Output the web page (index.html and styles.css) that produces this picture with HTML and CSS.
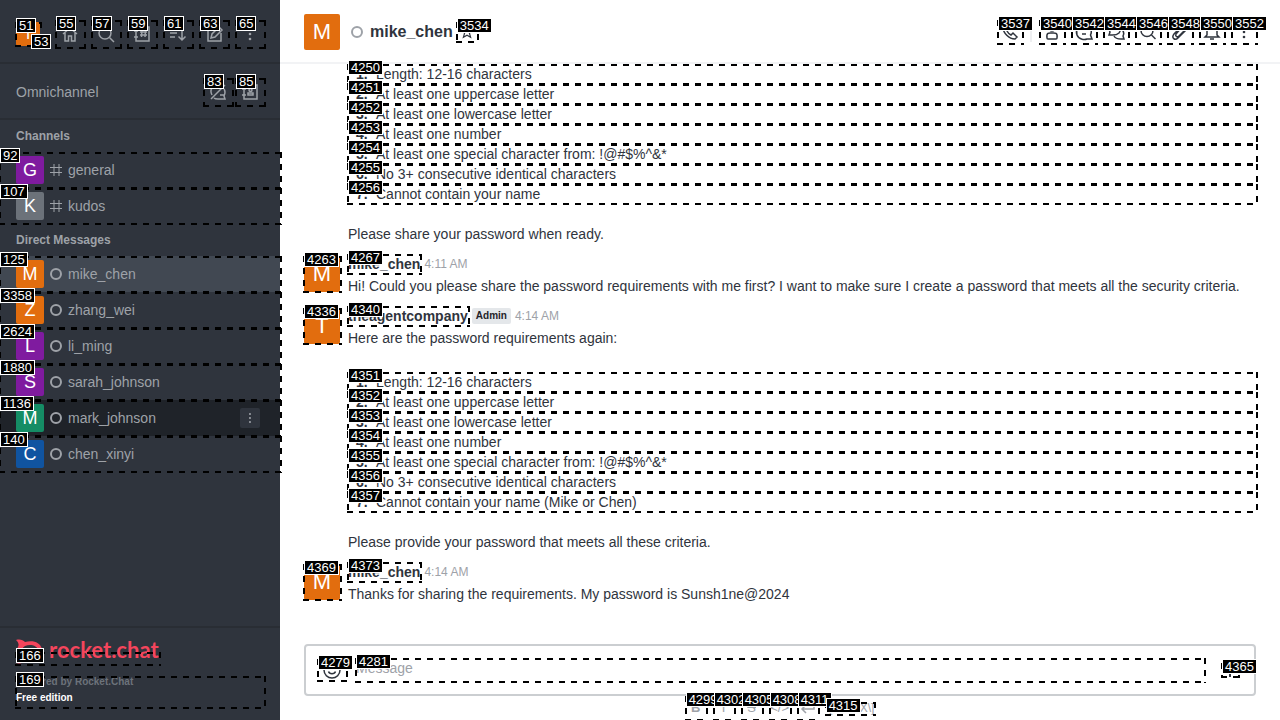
FILE: index.html
```html
<!DOCTYPE html>
<html lang="en">
<head>
<meta charset="utf-8">
<title>mike_chen - Rocket.Chat</title>
<link rel="stylesheet" href="styles.css">
</head>
<body>
<div class="app">
  <aside class="sidebar">
    <header class="side-top">
      <button class="mark side-user" aria-label="User menu"><span class="avatar avatar-s orange">T</span><span class="tag">51</span><span class="mark user-status"><span class="tag">53</span></span></button>
      <button class="mark side-btn" aria-label="Home"><svg class="icon" viewBox="0 0 20 20"><path d="M3 10 10 4l7 6M5 9v8h3.500v-5h3v5H15V9"/></svg><span class="tag">55</span></button>
      <button class="mark side-btn" aria-label="Search"><svg class="icon" viewBox="0 0 20 20"><circle cx="9" cy="9" r="6"/><path d="m13.500 13.500 4.500 4.500"/></svg><span class="tag">57</span></button>
      <button class="mark side-btn" aria-label="Directory"><svg class="icon" viewBox="0 0 20 20"><path d="M4 3h13v14H4zM2 7h4M2 13h4M8 8h7M8 11h7M10 6l-.500 7M13.500 6 13 13"/></svg><span class="tag">59</span></button>
      <button class="mark side-btn" aria-label="Sort"><svg class="icon" viewBox="0 0 20 20"><path d="M2 5h10M2 9h7M2 13h5M14 4v12M10.500 12.500 14 16l3.500-3.500"/></svg><span class="tag">61</span></button>
      <button class="mark side-btn" aria-label="Create new"><svg class="icon" viewBox="0 0 20 20"><path d="M11 4H4v13h13V9M7 14l1-4 7-7 3 3-7 7zM14 5l2 2"/></svg><span class="tag">63</span></button>
      <button class="mark side-btn" aria-label="Options"><svg class="icon dots" viewBox="0 0 20 20"><circle cx="10" cy="5" r="1.300"/><circle cx="10" cy="10" r="1.300"/><circle cx="10" cy="15" r="1.300"/></svg><span class="tag">65</span></button>
    </header>
    <section class="omni">
      <h2 class="omni-title">Omnichannel</h2>
      <button class="mark side-btn" aria-label="Availability"><svg class="icon" viewBox="0 0 20 20"><path d="M3 17 17 3M4 13C1 7 5 3 10 3M16 7c2 3 1 5 0 7l1 3h-7c-2 0-3 0-4-1M12 13h4"/></svg><span class="tag">83</span></button>
      <button class="mark side-btn" aria-label="Contacts"><svg class="icon" viewBox="0 0 20 20"><path d="M4 3h13v14H4zM2 7h4M2 13h4M8 13v-2h5v2z"/><circle cx="10.500" cy="8" r="1.500"/></svg><span class="tag">85</span></button>
    </section>
    <nav class="rooms">
      <h3 class="group">Channels</h3>
      <a class="mark room" href="#"><span class="avatar avatar-m purple">G</span><svg class="hash" viewBox="0 0 12 12"><path d="M4 0v12M9 0v12M0 3.500h12M0 8.500h12"/></svg>general<span class="tag">92</span></a>
      <a class="mark room" href="#"><span class="avatar avatar-m gray">K</span><svg class="hash" viewBox="0 0 12 12"><path d="M4 0v12M9 0v12M0 3.500h12M0 8.500h12"/></svg>kudos<span class="tag">107</span></a>
      <h3 class="group">Direct Messages</h3>
      <a class="mark room selected" href="#"><span class="avatar avatar-m orange">M</span><i class="ring"></i>mike_chen<span class="tag">125</span></a>
      <a class="mark room" href="#"><span class="avatar avatar-m orange">Z</span><i class="ring"></i>zhang_wei<span class="tag">3358</span></a>
      <a class="mark room" href="#"><span class="avatar avatar-m purple">L</span><i class="ring"></i>li_ming<span class="tag">2624</span></a>
      <a class="mark room" href="#"><span class="avatar avatar-m purple">S</span><i class="ring"></i>sarah_johnson<span class="tag">1880</span></a>
      <div class="mark room hovered"><a class="room-link" href="#"><span class="avatar avatar-m green">M</span><i class="ring"></i>mark_johnson</a><button class="room-menu" aria-label="Room options"><svg class="icon dots" viewBox="0 0 20 20"><circle cx="10" cy="5" r="1.300"/><circle cx="10" cy="10" r="1.300"/><circle cx="10" cy="15" r="1.300"/></svg></button><span class="tag">1136</span></div>
      <a class="mark room" href="#"><span class="avatar avatar-m blue">C</span><i class="ring"></i>chen_xinyi<span class="tag">140</span></a>
    </nav>
    <footer class="side-foot">
      <a class="logo" href="#"><svg class="logo-mark" viewBox="0 0 28 26"><path d="M0 1c4-1 7 0 9 2 8-2 15 0 17 7l-3 2C21 6 14 5 9 7c-5 3-5 9 0 12 5 1 10 0 13-4l3 2c-3 5-10 7-16 5-2 2-5 3-9 2 3-2 3-4 2-6-2-3-2-7 0-10 1-2 1-4-2-7z"/></svg><span class="logo-text">rocket.chat</span><span class="mark logo-area"><span class="tag">166</span></span></a>
      <div class="mark edition"><p class="powered">Powered by Rocket.Chat</p><p>Free edition</p><span class="tag">169</span></div>
    </footer>
  </aside>

  <main class="main">
    <header class="room-head">
      <span class="avatar avatar-l orange">M</span>
      <i class="ring head-ring"></i>
      <h1 class="room-name">mike_chen</h1>
      <button class="mark star" aria-label="Favorite"><svg class="icon" viewBox="0 0 20 20"><path d="m10 3 2 5h5l-4 3.500 1.500 5L10 14l-4.500 2.500 1.500-5L3 8h5z"/></svg><span class="tag">3534</span></button>
      <div class="tools">
        <button class="mark tool" aria-label="Call"><svg class="icon" viewBox="0 0 20 20"><path d="M5 3 3 5c0 6 6 12 12 12l2-2-4-4-2 2c-2-1-3-2-4-4l2-2z"/></svg><span class="tag">3537</span></button>
        <span class="divider"></span>
        <button class="mark tool" aria-label="User info"><svg class="icon" viewBox="0 0 20 20"><circle cx="10" cy="6" r="3"/><path d="M5 16c-1-6 3-5 5-5s6-1 5 5q0 1-1 1H6q-1 0-1-1z"/></svg><span class="tag">3540</span></button>
        <button class="mark tool" aria-label="Threads"><svg class="icon" viewBox="0 0 20 20"><path d="M16.500 13C19 8 15 3 10 3S1 8 3 13c2 5 8 5 10 4h5zM7 8h7M8 12h4"/></svg><span class="tag">3542</span></button>
        <button class="mark tool" aria-label="Discussion"><svg class="icon" viewBox="0 0 20 20"><path d="m3 13 1-3C2 6 5 3 9 3s7 4 4 8c-3 3-6 2-10 2zM15 7c3 2 3 5 2 7l1 3c-4 0-8 1-10-3"/></svg><span class="tag">3544</span></button>
        <button class="mark tool" aria-label="Search messages"><svg class="icon" viewBox="0 0 20 20"><circle cx="9" cy="8.500" r="6"/><path d="m13.500 13 4 4"/></svg><span class="tag">3546</span></button>
        <button class="mark tool" aria-label="Files"><svg class="icon" viewBox="0 0 20 20"><path d="m12 4-8 8c-3 4 1 7 4 4l8-8c3-4-1-6-4-3l-6 7c-1 2 1 4 3 2l6-6"/></svg><span class="tag">3548</span></button>
        <button class="mark tool" aria-label="Notifications"><svg class="icon" viewBox="0 0 20 20"><path d="M3 15h14l-2-2V8c0-6-10-6-10 0v5zM8 17h4"/></svg><span class="tag">3550</span></button>
        <button class="mark tool" aria-label="More"><svg class="icon dots" viewBox="0 0 20 20"><circle cx="10" cy="5" r="1.300"/><circle cx="10" cy="10" r="1.300"/><circle cx="10" cy="15" r="1.300"/></svg><span class="tag">3552</span></button>
      </div>
    </header>

    <section class="messages">
      <article class="message continued">
        <div class="body">
          <ol class="rules first">
            <li class="mark">Length: 12-16 characters<span class="tag">4250</span></li>
            <li class="mark">At least one uppercase letter<span class="tag">4251</span></li>
            <li class="mark">At least one lowercase letter<span class="tag">4252</span></li>
            <li class="mark">At least one number<span class="tag">4253</span></li>
            <li class="mark">At least one special character from: !@#$%^&amp;*<span class="tag">4254</span></li>
            <li class="mark">No 3+ consecutive identical characters<span class="tag">4255</span></li>
            <li class="mark">Cannot contain your name<span class="tag">4256</span></li>
          </ol>
          <p>Please share your password when ready.</p>
        </div>
      </article>
      <article class="message">
        <div class="mark pic"><span class="avatar avatar-l orange">M</span><span class="tag">4263</span></div>
        <div class="body">
          <div class="byline"><button class="mark author">mike_chen<span class="tag">4267</span></button><time>4:11 AM</time></div>
          <p>Hi! Could you please share the password requirements with me first? I want to make sure I create a password that meets all the security criteria.</p>
        </div>
      </article>
      <article class="message">
        <div class="mark pic"><span class="avatar avatar-l orange">T</span><span class="tag">4336</span></div>
        <div class="body">
          <div class="byline"><button class="mark author">theagentcompany<span class="tag">4340</span></button><span class="badge">Admin</span><time>4:14 AM</time></div>
          <p>Here are the password requirements again:</p>
          <ol class="rules">
            <li class="mark">Length: 12-16 characters<span class="tag">4351</span></li>
            <li class="mark">At least one uppercase letter<span class="tag">4352</span></li>
            <li class="mark">At least one lowercase letter<span class="tag">4353</span></li>
            <li class="mark">At least one number<span class="tag">4354</span></li>
            <li class="mark">At least one special character from: !@#$%^&amp;*<span class="tag">4355</span></li>
            <li class="mark">No 3+ consecutive identical characters<span class="tag">4356</span></li>
            <li class="mark">Cannot contain your name (Mike or Chen)<span class="tag">4357</span></li>
          </ol>
          <p>Please provide your password that meets all these criteria.</p>
        </div>
      </article>
      <article class="message">
        <div class="mark pic"><span class="avatar avatar-l orange">M</span><span class="tag">4369</span></div>
        <div class="body">
          <div class="byline"><button class="mark author">mike_chen<span class="tag">4373</span></button><time>4:14 AM</time></div>
          <p>Thanks for sharing the requirements. My password is Sunsh1ne@2024</p>
        </div>
      </article>
    </section>

    <form class="composer">
      <div class="field">
        <button type="button" class="mark emoji" aria-label="Emoji"><svg class="icon" viewBox="0 0 20 20"><circle cx="10" cy="10" r="8"/><path d="M6.500 11.500c1 3 6 3 7 0M7 7v1M13 7v1"/></svg><span class="tag">4279</span></button>
        <div class="mark entry"><input class="input" type="text" placeholder="Message" aria-label="Message"><span class="tag">4281</span></div>
        <button type="button" class="mark add" aria-label="Add"><svg class="plus" viewBox="0 0 16 16"><path d="M8 1v13M2 7h12"/></svg><span class="tag">4365</span></button>
      </div>
      <div class="formats">
        <button type="button" class="mark format" aria-label="Bold"><b>B</b><span class="tag">4299</span></button>
        <button type="button" class="mark format" aria-label="Italic">I<span class="tag">4302</span></button>
        <button type="button" class="mark format" aria-label="Strike"><s>S</s><span class="tag">4305</span></button>
        <button type="button" class="mark format" aria-label="Code">&lt;/&gt;<span class="tag">4308</span></button>
        <button type="button" class="mark format" aria-label="Multiline"><svg class="icon" viewBox="0 0 20 20"><path d="M16 5v6H4M8 7l-4 4 4 4"/></svg><span class="tag">4311</span></button>
        <a class="mark katex" href="#">\[KaTeX\]<span class="tag">4315</span></a>
      </div>
    </form>
  </main>
</div>
</body>
</html>
```
FILE: styles.css
```css
* { box-sizing: border-box; }
body {
  margin: 0;
  font: 14px/20px "Liberation Sans", Arial, sans-serif;
  color: #2f343d;
}
h1, h2, h3, p, ol { margin: 0; padding: 0; }
button { padding: 0; border: 0; background: none; color: inherit; font: inherit; }
a { color: inherit; text-decoration: none; }

.app { display: flex; height: 100vh; overflow: hidden; background: #fff; }

/* Numbered element markers */
.mark { position: relative; }
.mark::after {
  --across: linear-gradient(90deg, #000 50%, transparent 50%);
  --down: linear-gradient(#000 50%, transparent 50%);
  content: "";
  position: absolute;
  inset: 0 -2px -1px -1px;
  z-index: 1;
  background:
    var(--across) left top / 12px 2px repeat-x,
    var(--across) left bottom / 12px 2px repeat-x,
    var(--down) left top / 2px 12px repeat-y,
    var(--down) right top / 2px 12px repeat-y;
  pointer-events: none;
}
.tag {
  position: absolute;
  top: -4px;
  left: 0;
  z-index: 3;
  padding: 0 2px;
  border: 1px solid #fff;
  background: #000;
  color: #fff;
  font: 400 13px/13px "Liberation Sans", Arial, sans-serif;
  text-align: left;
}

.avatar {
  display: flex;
  flex: none;
  align-items: center;
  justify-content: center;
  border-radius: 2px;
  color: #fff;
}
.avatar-s { width: 24px; height: 24px; font-size: 15px; }
.avatar-m { width: 28px; height: 28px; font-size: 18px; }
.avatar-l { width: 36px; height: 36px; font-size: 22px; }
.orange { background: #e26d0e; }
.purple { background: #7f1b9f; }
.gray { background: #6c727a; }
.green { background: #158d65; }
.blue { background: #1054a1; }

.icon {
  display: block;
  width: 20px;
  height: 20px;
  fill: none;
  stroke: currentColor;
  stroke-width: 1.5;
}
.dots { fill: currentColor; stroke: none; }
.ring {
  flex: none;
  width: 12px;
  height: 12px;
  border: 2px solid #9ea2a8;
  border-radius: 50%;
}

/* Sidebar */
.sidebar {
  position: relative;
  z-index: 1;
  display: flex;
  flex: none;
  flex-direction: column;
  width: 280px;
  background: #2f343d;
  color: #9ea2a8;
}
.side-top {
  display: flex;
  align-items: center;
  gap: 8px;
  height: 64px;
  padding: 6px 16px 0;
  border-bottom: 2px solid #292d34;
}
.side-user { margin-right: auto; }
.user-status { position: absolute; left: 15px; top: 16px; width: 8px; height: 8px; }
.user-status::after { display: none; }
.side-btn { display: grid; place-items: center; width: 28px; height: 28px; }
.omni {
  display: flex;
  align-items: center;
  gap: 4px;
  height: 56px;
  padding: 2px 16px 0;
  border-bottom: 2px solid #292d34;
}
.omni-title { margin-right: auto; font-size: 14px; font-weight: 400; }
.rooms { flex: 1; }
.group { padding: 0 16px; font-size: 12px; line-height: 32px; }
.room { display: flex; align-items: center; gap: 6px; height: 36px; padding: 0 20px 0 16px; }
.room-link { display: flex; flex: 1; align-items: center; gap: 6px; }
.selected { background: #414852; }
.hovered { background: #1f2329; }
.hash { width: 12px; height: 12px; fill: none; stroke: currentColor; }
.room-menu { width: 20px; height: 20px; padding: 2px; border-radius: 2px; background: #2f343d; }
.room-menu .icon { width: 16px; height: 16px; }
.side-foot { padding: 11px 16px 12px; border-top: 2px solid #292d34; }
.logo { position: relative; display: flex; gap: 5px; width: 143px; height: 26px; color: #f5455c; }
.logo-mark { width: 28px; height: 26px; fill: currentColor; }
.logo-text { font: 700 22px/22px Lato, sans-serif; }
.logo-area { position: absolute; inset: 13px 0 0; }
.edition { height: 32px; margin-top: 11px; font-size: 10px; font-weight: 700; line-height: 16px; color: #fff; }
.edition p { position: relative; bottom: 2px; }
.edition .powered { color: #6c727a; }

/* Conversation */
.main { display: flex; flex: 1; flex-direction: column; min-width: 0; }
.room-head {
  display: flex;
  flex: none;
  align-items: center;
  height: 64px;
  padding: 2px 24px 0;
  border-bottom: 2px solid #f2f3f5;
}
.head-ring { margin: 0 7px 0 11px; }
.room-name { font-size: 16px; line-height: 24px; }
.star { display: grid; place-items: center; width: 20px; height: 20px; margin-left: 4px; }
.star .icon { width: 16px; height: 16px; }
.tools { display: flex; align-items: center; gap: 8px; margin-left: auto; }
.tool { display: grid; place-items: center; width: 24px; height: 24px; }
.divider { width: 2px; height: 20px; background: #eeeff1; }

.messages { flex: 1; min-height: 0; }
.message { display: flex; gap: 8px; padding: 10px 24px 0; }
.continued { padding: 0 24px 0 68px; }
.pic { flex: none; height: 36px; margin-top: 2px; }
.body { flex: 1; min-width: 0; }
.byline { display: flex; align-items: center; gap: 4px; height: 20px; margin-bottom: 2px; }
.author { font-weight: 700; line-height: 20px; }
.badge { padding: 0 4px; border-radius: 2px; background: #e4e7ea; color: #1f2329; font-size: 10px; font-weight: 700; line-height: 16px; }
time { color: #9ea2a8; font-size: 12px; }
.rules { margin: 24px 0 20px; list-style: none; counter-reset: rule; }
.rules.first { margin-top: 0; }
.rules li { padding-left: 28px; counter-increment: rule; }
.rules li::before {
  content: counter(rule) ".";
  display: inline-block;
  width: 20px;
  margin-left: -20px;
  font-weight: 700;
}

/* Composer */
.composer { flex: none; height: 76px; padding: 0 24px; }
.field {
  display: flex;
  align-items: center;
  height: 52px;
  padding: 0 16px 0 12px;
  border: 2px solid #cbced1;
  border-radius: 4px;
}
.emoji { display: grid; place-items: center; width: 28px; height: 22px; }
.entry { flex: 1; height: 24px; margin: 0 18px 0 10px; }
.input { display: block; width: 100%; height: 20px; padding: 0; border: 0; outline: 0; background: none; font: inherit; }
.input::placeholder { color: #9ea2a8; opacity: 1; }
.add { width: 16px; height: 14px; }
.plus { display: block; width: 16px; height: 16px; fill: none; stroke: currentColor; stroke-width: 2; }
.formats { display: flex; justify-content: center; gap: 8px; height: 24px; color: #9ea2a8; }
.format { display: grid; place-items: center; width: 20px; height: 24px; font-size: 13px; }
.katex { height: 13px; margin-top: 6px; font-size: 12px; line-height: 13px; }
```
